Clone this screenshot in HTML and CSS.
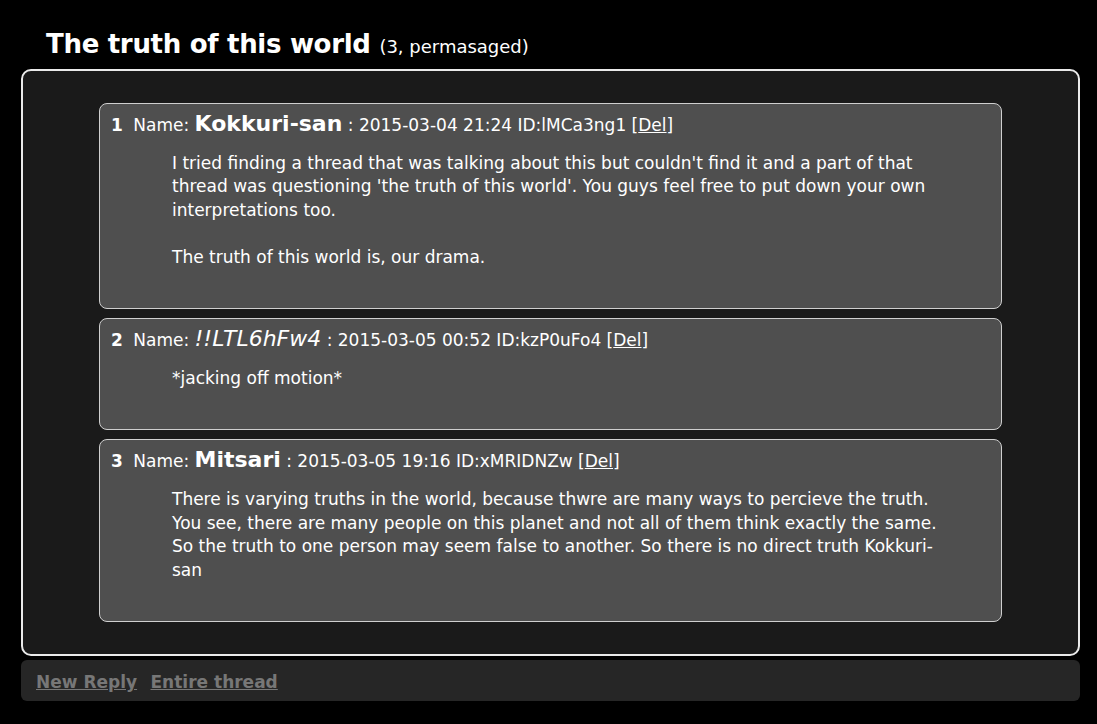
FILE: index.html
```html
<!DOCTYPE html>
<html lang="en">
  <head>
    <meta charset="UTF-8" />
    <title>The truth of this world</title>
    <link rel="stylesheet" href="styles.css">
  </head>
  <body>
    <div class="thread">
      <h2 class="title">The truth of this world <span class="count">(3, permasaged)</span></h2>
      <div class="posts">
        <div class="post">
          <div class="head">
            <span class="num">1</span> Name: <span class="name">Kokkuri-san</span> : 2015-03-04 21:24 ID:lMCa3ng1 [<a href="#">Del</a>]
          </div>
          <div class="body">
            I tried finding a thread that was talking about this but couldn't find it and a part of that<br>
            thread was questioning 'the truth of this world'. You guys feel free to put down your own<br>
            interpretations too.<br>
            <br>
            The truth of this world is, our drama.
          </div>
        </div>
        <div class="post">
          <div class="head">
            <span class="num">2</span> Name: <span class="trip">!!LTL6hFw4</span> : 2015-03-05 00:52 ID:kzP0uFo4 [<a href="#">Del</a>]
          </div>
          <div class="body">
            *jacking off motion*
          </div>
        </div>
        <div class="post">
          <div class="head">
            <span class="num">3</span> Name: <span class="name">Mitsari</span> : 2015-03-05 19:16 ID:xMRIDNZw [<a href="#">Del</a>]
          </div>
          <div class="body">
            There is varying truths in the world, because thwre are many ways to percieve the truth.<br>
            You see, there are many people on this planet and not all of them think exactly the same.<br>
            So the truth to one person may seem false to another. So there is no direct truth Kokkuri-<br>
            san
          </div>
        </div>
      </div>
      <div class="links">
        <a href="#">New Reply</a>
        <a href="#">Entire thread</a>
      </div>
    </div>
  </body>
</html>
```

FILE: styles.css
```css
body {
  margin: 0;
  padding: 0;
  background: #000;
  color: #fff;
  font-family: "DejaVu Sans", Verdana, sans-serif;
  font-size: 17px;
}

.thread {
  padding: 24px 17px 0 21px;
}

.title {
  margin: 0 0 2px 25px;
  font-size: 26px;
  font-weight: bold;
  line-height: 40px;
  letter-spacing: -0.3px;
}

.count {
  font-size: 18px;
  font-weight: normal;
  letter-spacing: 0;
}

.posts {
  background: #1a1a1a;
  border: 2px solid #eaeaea;
  border-radius: 10px;
  padding: 32px 76px 32px 76px;
  display: flex;
  flex-direction: column;
  gap: 9px;
}

.post {
  background: #4f4f4f;
  border: 1px solid #cfcfcf;
  border-radius: 8px;
  padding: 7px 11px 39px;
}

.head {
  line-height: 26px;
}

.num {
  font-weight: bold;
  margin-right: 5px;
}

.name {
  font-size: 22px;
  font-weight: bold;
}

.trip {
  font-size: 22px;
  font-style: italic;
}

.head a {
  color: #fff;
}

.body {
  margin: 14px 0 0 61px;
  line-height: 23.4px;
}

.links {
  margin-top: 4px;
  background: #262626;
  border-radius: 6px;
  padding: 11px 15px 8px;
  line-height: 22px;
}

.links a {
  color: #777;
  font-weight: bold;
  margin-right: 8px;
}
```
